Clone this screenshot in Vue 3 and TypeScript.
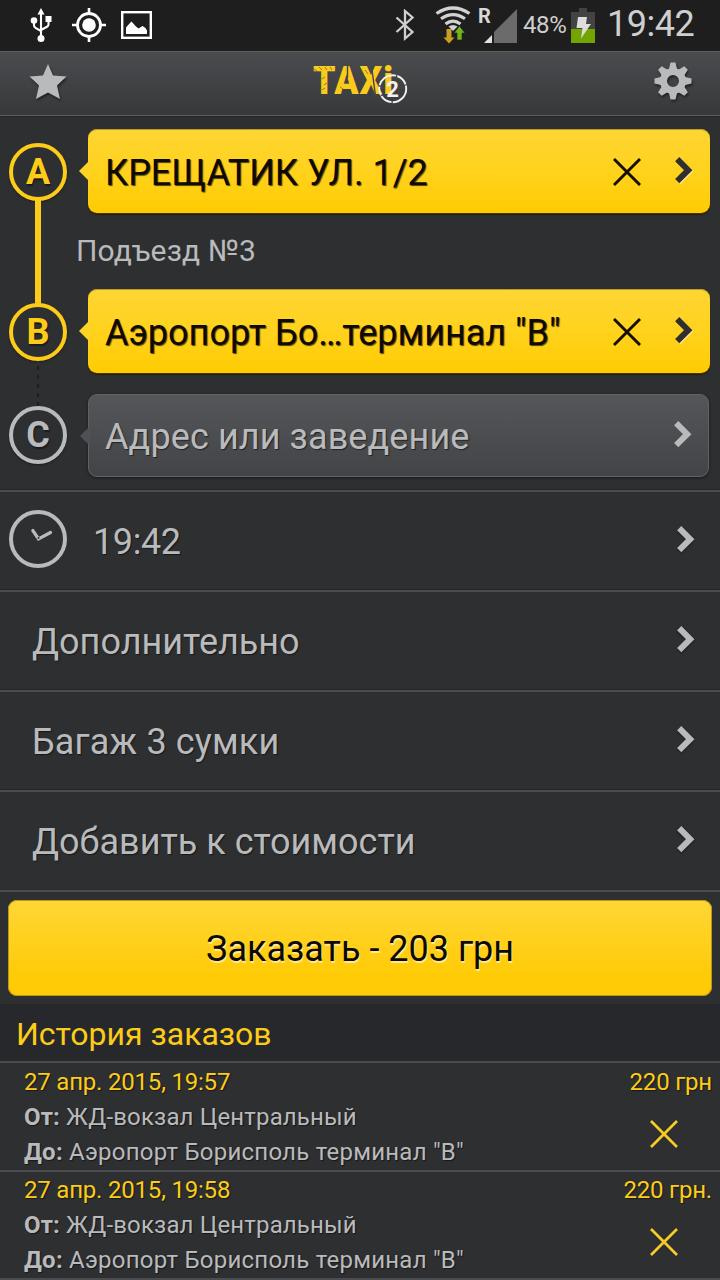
<script setup lang="ts">
interface Stop { letter: string; text: string; filled: boolean; cls: string }
interface Option { text: string; cls: string }
interface Order { date: string; price: string; from: string; to: string }

const stops: Stop[] = [
  { letter: 'A', text: 'КРЕЩАТИК УЛ. 1/2', filled: true, cls: 'first' },
  { letter: 'B', text: 'Аэропорт Бо…терминал "В"', filled: true, cls: 'second' },
  { letter: 'C', text: 'Адрес или заведение', filled: false, cls: 'empty' },
]
const options: Option[] = [
  { text: 'Дополнительно', cls: 'extra' },
  { text: 'Багаж 3 сумки', cls: 'bags' },
  { text: 'Добавить к стоимости', cls: 'tip' },
]
const orders: Order[] = [
  { date: '27 апр. 2015, 19:57', price: '220 грн', from: 'ЖД-вокзал Центральный', to: 'Аэропорт Борисполь терминал "В"' },
  { date: '27 апр. 2015, 19:58', price: '220 грн.', from: 'ЖД-вокзал Центральный', to: 'Аэропорт Борисполь терминал "В"' },
]
const teeth = [0, 45, 90, 135, 180, 225, 270, 315]
</script>

<template>
  <div class="screen">
    <div class="status">
      <svg class="usb" width="24" height="36" viewBox="0 0 24 36">
        <g fill="none" stroke="#fff" stroke-width="2.1">
          <path d="M12 5V32M5 13V17.500Q5 19 6.500 19.800L12 23M19.500 11V16.500Q19.500 18 18 18.800L12 22" />
        </g>
        <path d="M12 0L15.500 6.500H8.500Z" fill="#fff" />
        <circle cx="5" cy="12.500" r="3.300" fill="#fff" />
        <rect x="16.500" y="8" width="6" height="6" fill="#fff" />
        <circle cx="12" cy="30.500" r="3.500" fill="#fff" />
      </svg>
      <svg class="gps" width="36" height="36" viewBox="0 0 36 36">
        <circle cx="18" cy="18" r="11.500" fill="none" stroke="#fff" stroke-width="2.800" />
        <circle cx="18" cy="18" r="6.800" fill="#fff" />
        <path d="M18 1V6M18 30V35M1 18H6M30 18H35" stroke="#fff" stroke-width="2.600" />
      </svg>
      <svg class="pic" width="31" height="28" viewBox="0 0 31 28">
        <rect x="1.200" y="1.200" width="28.600" height="25.600" fill="none" stroke="#fff" stroke-width="2.400" />
        <path d="M5 23V16.500L8.500 12.500L10.500 10.500L15 15.500L17.500 17.500L21.500 15L24.500 17L26 19.500V23Z" fill="#fff" />
      </svg>
      <span class="gap"></span>
      <svg class="bt" width="20" height="32" viewBox="0 0 20 32">
        <path d="M1.500 8.500L17.500 23L10 29.500V2L17.500 8.500L1.500 23" fill="none" stroke="#cfcfcf" stroke-width="2.300" />
      </svg>
      <svg class="wifi" width="36" height="38" viewBox="0 0 36 38">
        <g fill="none" stroke="#d2d2d2" stroke-width="3.200">
          <path d="M1.500 7.500Q18 -3.500 34.500 7.500" />
          <path d="M6 12.800Q18 4.500 30 12.800" />
          <path d="M10.500 18Q18 12.200 25.500 18" />
        </g>
        <path d="M13.500 20.500Q18 17.500 22.500 20.500L18 25Z" fill="#d2d2d2" />
        <path d="M11.500 23H16.500V31.500H19.500L14 37.500L8.500 31.500H11.500Z" fill="#c99f22" />
        <path d="M22 34H27V27H30L24.500 20L19 27H22Z" fill="#6fb41a" stroke="#1e1e1e" stroke-width=".6" />
      </svg>
      <svg class="signal" width="42" height="41" viewBox="0 0 42 41">
        <path d="M40 7V41H17V30Z" fill="#6b6b6b" />
        <path d="M7 41H15V33Z" fill="#e2e2e2" />
        <text x="1" y="21" class="roam">R</text>
      </svg>
      <span class="percent">48%</span>
      <svg class="battery" width="24" height="35" viewBox="0 0 24 35">
        <path d="M8 0H16V4H24V35H0V4H8Z" fill="#434343" />
        <rect y="21" width="24" height="14" fill="#73a500" />
        <path d="M7 9H16L15 16H20L10 30.500L11.500 20H5.500Z" fill="#ddd" />
      </svg>
      <span class="clock">19:42</span>
    </div>

    <div class="header">
      <svg class="star" width="40" height="40" viewBox="0 0 40 40">
        <path d="M20 2L25 13.500L38.500 14.500L29 23.500L32 37L20 30.500L8 37L11 23.500L1.500 14.500L15 13.500Z" fill="#b9babc" />
      </svg>
      <svg class="logo" width="100" height="60" viewBox="0 0 100 60">
        <text x="3" y="42" class="taxi" textLength="81" lengthAdjust="spacingAndGlyphs">TAXi</text>
        <g stroke="#434446" fill="none">
          <path stroke-width="1.400" d="M37.500 13V26M61.500 14L65.500 44" />
          <path stroke-width=".6" d="M4 17L7 19M9 15L12 18M15 15L17 18M20 15L22 18M12 27L15 25M14 33L17 31M12 38L15 36M30 35L33 37M55 18L58 22M70 34L73 38M76 26L80 24M77 33L82 31" />
        </g>
        <circle cx="82.700" cy="36.700" r="13.500" fill="none" stroke="#f1f1f1" stroke-width="1.900" stroke-dasharray="21 1.300 12 1 9 1.300" />
        <text x="82.500" y="44.700" class="two" text-anchor="middle">2</text>
      </svg>
      <svg class="gear" width="40" height="40" viewBox="-20 -20 40 40">
        <g fill="#b9babc">
          <path v-for="a in teeth" :key="a" d="M-4.500 -10L-2.500 -18.500H2.500L4.500 -10Z" :transform="`rotate(${a})`" />
        </g>
        <circle r="9.500" fill="none" stroke="#b9babc" stroke-width="7" />
      </svg>
    </div>

    <div class="route">
      <div class="rail">
        <span class="marker on">A</span>
        <span class="link"></span>
        <span class="marker on">B</span>
        <span class="dots"></span>
        <span class="marker">C</span>
      </div>
      <div class="cards">
        <template v-for="(s, i) in stops" :key="s.letter">
          <div class="card" :class="[s.cls, { filled: s.filled }]">
            <svg class="pointer" width="11" height="20" viewBox="0 0 11 20">
              <path d="M11 0L1 10L11 20Z" :fill="s.filled ? '#ffd427' : '#505154'" />
            </svg>
            <span class="label">{{ s.text }}</span>
            <svg v-if="s.filled" class="cross" width="28" height="28" viewBox="0 0 28 28">
              <path d="M1 1L27 27M27 1L1 27" stroke="#140f00" stroke-width="2.900" />
            </svg>
            <svg class="chev" width="18" height="27" viewBox="0 0 18 27">
              <path d="M2.200 2.200L13.200 13.200L2.200 24.200" fill="none" :stroke="s.filled ? '#2f2f2d' : '#b9babc'" stroke-width="6" />
            </svg>
          </div>
          <div v-if="i === 0" class="note"><span>Подъезд №3</span></div>
        </template>
      </div>
    </div>

    <div class="row time">
      <svg class="dial" width="58" height="58" viewBox="0 0 58 58">
        <circle cx="29" cy="29" r="27" fill="none" stroke="#b9babc" stroke-width="4" />
        <path d="M23.800 20.500L29.500 28.800L41.500 22.500" fill="none" stroke="#b9babc" stroke-width="3.200" stroke-linecap="round" />
        <circle cx="29.500" cy="28" r="1" fill="#2e2f31" />
      </svg>
      <span class="label">19:42</span>
      <svg class="chev" width="18" height="27" viewBox="0 0 18 27">
        <path d="M2.200 2.200L13.200 13.200L2.200 24.200" fill="none" stroke="#b9babc" stroke-width="6" />
      </svg>
    </div>
    <div v-for="o in options" :key="o.text" class="row" :class="o.cls">
      <span class="label">{{ o.text }}</span>
      <svg class="chev" width="18" height="27" viewBox="0 0 18 27">
        <path d="M2.200 2.200L13.200 13.200L2.200 24.200" fill="none" stroke="#b9babc" stroke-width="6" />
      </svg>
    </div>

    <div class="action">
      <button class="order">Заказать - 203 грн</button>
    </div>

    <div class="history-title"><span>История заказов</span></div>
    <div v-for="o in orders" :key="o.date" class="item">
      <div class="info">
        <div class="date">{{ o.date }}</div>
        <div class="from"><b>От:</b> {{ o.from }}</div>
        <div class="to"><b>До:</b> {{ o.to }}</div>
      </div>
      <div class="side">
        <div class="price">{{ o.price }}</div>
        <svg class="remove" width="28" height="28" viewBox="0 0 28 28">
          <path d="M1 1L27 27M27 1L1 27" stroke="#f6cd24" stroke-width="2.700" />
        </svg>
      </div>
    </div>
  </div>
</template>

<style>
body { background: #2e2f31; }
</style>

<style scoped>
.screen {
  box-sizing: border-box;
  width: 720px;
  height: 1280px;
  overflow: hidden;
  background: #2e2f31;
  color: #b9babc;
  font-family: Roboto, "Liberation Sans", sans-serif;
  font-size: 36px;
}
.screen * { box-sizing: border-box; }
svg { display: block; flex: none; }
span, div { white-space: nowrap; }

.status { display: flex; height: 51px; background: #1e1e1e; color: #cfcfcf; }
.usb { margin: 8px 0 0 29px; }
.gps { margin: 7px 0 0 18px; }
.pic { margin: 11px 0 0 14px; }
.gap { flex: 1; }
.bt { margin: 9px 0 0; }
.wifi { margin: 6px 0 0 20px; }
.signal { margin: 2px 0 0 6px; }
.roam { font: 700 20px Roboto, sans-serif; fill: #d8d8d8; }
.percent { width: 42px; margin: 13px 0 0 4px; font-size: 24px; line-height: 25px; letter-spacing: -0.4px; }
.battery { margin: 8px 0 0 6px; }
.clock { width: 113px; margin-left: 12px; line-height: 49px; letter-spacing: -0.5px; }

.header {
  display: flex;
  align-items: flex-start;
  height: 65px;
  border-top: 1px solid #5d5e60;
  border-bottom: 1px solid #5a5b5e;
  background: linear-gradient(#4b4c4f, #37383a);
  box-shadow: 0 1px 1px #27282a;
}
.star { margin: 10px 0 0 28px; filter: drop-shadow(1px 2px 1px #222); }
.logo { margin: 0 0 0 242px; }
.gear { margin: 9px 0 0 243px; filter: drop-shadow(1px 2px 1px #222); }
.taxi { font: 900 39px Roboto, sans-serif; fill: #fbcb1b; letter-spacing: 1px; }
.two { font: 700 22px Roboto, sans-serif; fill: #f1f1f1; }

.route { display: flex; height: 373px; }
.rail { display: flex; flex-direction: column; align-items: center; width: 58px; margin: 27px 0 0 9px; }
.marker {
  flex: none;
  width: 58px;
  height: 58px;
  border: 4px solid #b9babc;
  border-radius: 50%;
  font-weight: 700;
  text-align: center;
  line-height: 50px;
  text-shadow: 1px 2px 1px #1c1c1e;
  box-shadow: 0 1px 2px #1c1c1e;
}
.marker.on { color: #fccc18; border-color: #fccc18; }
.link { width: 6px; height: 106px; margin: -2px 0; background: #fccc18; }
.dots {
  width: 2px;
  height: 45px;
  background: repeating-linear-gradient(#2e2f31 0 5px, #1d1e20 5px 9px);
}
.cards { display: flex; flex-direction: column; width: 622px; margin: 13px 0 0 21px; }
.card {
  position: relative;
  display: flex;
  align-items: center;
  height: 84px;
  padding-left: 17px;
  border-radius: 9px;
}
.card.filled {
  color: #0d0a00;
  background: linear-gradient(#ffd633, #ffd21d 50%, #ffcc02);
  box-shadow: inset 0 1px 0 #b89b2f, 0 1px 1px #4d3f08, 0 2px 1px #211c0c;
}
.card.second { margin-bottom: 21px; }
.card.empty {
  width: 621px;
  height: 83px;
  padding-left: 16px;
  border: 1px solid #616265;
  background: linear-gradient(#555659, #434447);
  box-shadow: 0 1px 3px #17181a;
}
.pointer { position: absolute; left: -10px; top: 32px; }
.card.empty .pointer { top: 31px; }
.card .label { flex: 1; padding-top: 4px; }
.card.filled .label { text-shadow: 1px 1px 1px rgba(20, 15, 0, .75); }
.card.empty .label { padding-top: 3px; text-shadow: 1px 1px 1px #222; letter-spacing: 0.1px; }
.card .cross { margin-right: 34px; margin-top: 2px; }
.card .chev { margin-right: 17px; margin-top: -2px; }
.card.empty .chev { margin-right: 16px; }
.card.filled .chev { filter: drop-shadow(1px 1px 0 #ffe89a); }
.note { height: 76px; font-size: 30px; line-height: 76px; letter-spacing: 0.2px; }
.note span { margin-left: -12px; }

.row {
  display: flex;
  align-items: center;
  height: 100px;
  padding: 0 25px 0 32px;
  border-top: 2px solid #4b4c4f;
  box-shadow: 0 -1px 0 #242527;
}
.row.time { margin-top: 1px; padding-left: 9px; }
.row.bags { letter-spacing: 0.15px; }
.dial { margin-top: -4px; }
.row .label { flex: 1; padding-top: 2px; text-shadow: 1px 1px 1px #17181a; }
.row.time .label { margin-left: 26px; letter-spacing: -0.4px; }
.row .chev { margin-top: -4px; filter: drop-shadow(0 1px 1px #1b1b1d); }

.action { height: 114px; padding: 8px; border-top: 2px solid #4b4c4f; }
.order {
  display: block;
  width: 704px;
  height: 96px;
  padding: 2px 0 0;
  border: 0;
  border-radius: 9px;
  background: linear-gradient(#ffd636, #ffcb06 80%, #ffca06);
  box-shadow: inset 0 0 0 1px #b8961c;
  color: #0d0a00;
  font: 400 36px Roboto, "Liberation Sans", sans-serif;
  text-shadow: 1px 2px 0 #ffe893;
}
.history-title {
  height: 59px;
  padding-left: 16px;
  border-bottom: 2px solid #4b4c4f;
  background: #27282b;
  color: #fccc18;
  font-size: 32px;
  line-height: 60px;
}
.item {
  display: flex;
  justify-content: space-between;
  height: 109px;
  padding: 2px 8px 0 24px;
  border-bottom: 2px solid #4b4c4f;
  font-size: 24px;
  line-height: 35px;
  text-shadow: 1px 1px 1px #17181a;
}
.item + .item { height: 108px; padding-top: 1px; }
.date, .price { color: #fccc18; }
.date { letter-spacing: -0.2px; }
.price { letter-spacing: -0.2px; }
.from { letter-spacing: 0.15px; }
.to { letter-spacing: 0.23px; }
.side { display: flex; flex-direction: column; align-items: flex-end; }
.remove { margin: 20px 34px 0 0; }
</style>
